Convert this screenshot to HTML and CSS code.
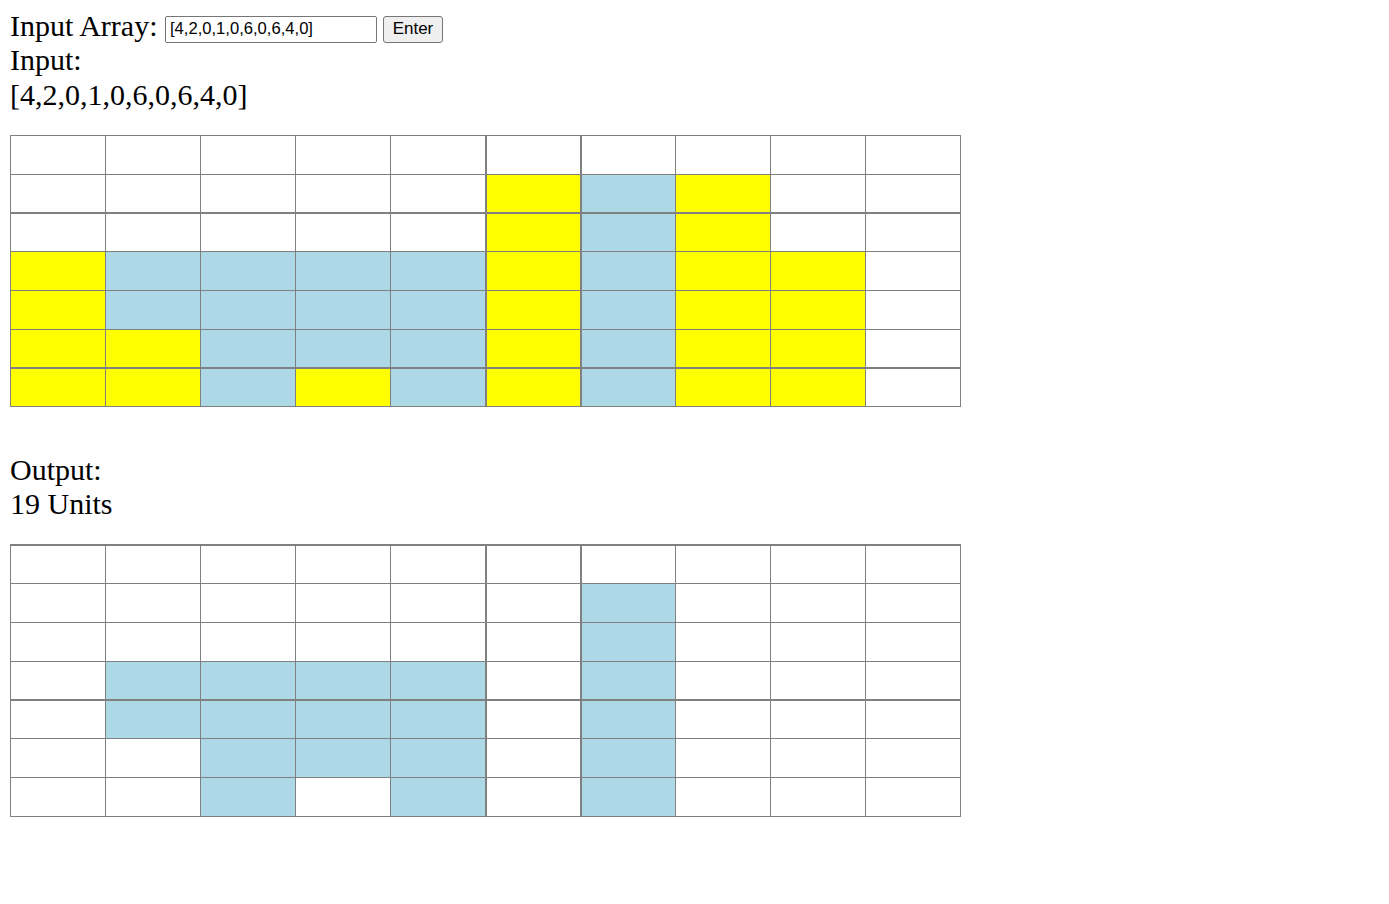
FILE: index.html
```html
<!DOCTYPE html>
<html>
<head>
<meta charset="utf-8">
<link rel="stylesheet" href="styles.css">
</head>
<body>
<div class="page">
  <div class="line first">Input Array: <input class="arr-input" type="text" value="[4,2,0,1,0,6,0,6,4,0]"><button class="enter">Enter</button></div>
  <div class="line">Input:</div>
  <div class="line">[4,2,0,1,0,6,0,6,4,0]</div>
  <div class="grid grid-in">
    <div></div><div></div><div></div><div></div><div></div><div></div><div></div><div></div><div></div><div></div>
    <div></div><div></div><div></div><div></div><div></div><div class="y"></div><div class="b"></div><div class="y"></div><div></div><div></div>
    <div></div><div></div><div></div><div></div><div></div><div class="y"></div><div class="b"></div><div class="y"></div><div></div><div></div>
    <div class="y"></div><div class="b"></div><div class="b"></div><div class="b"></div><div class="b"></div><div class="y"></div><div class="b"></div><div class="y"></div><div class="y"></div><div></div>
    <div class="y"></div><div class="b"></div><div class="b"></div><div class="b"></div><div class="b"></div><div class="y"></div><div class="b"></div><div class="y"></div><div class="y"></div><div></div>
    <div class="y"></div><div class="y"></div><div class="b"></div><div class="b"></div><div class="b"></div><div class="y"></div><div class="b"></div><div class="y"></div><div class="y"></div><div></div>
    <div class="y"></div><div class="y"></div><div class="b"></div><div class="y"></div><div class="b"></div><div class="y"></div><div class="b"></div><div class="y"></div><div class="y"></div><div></div>
  </div>
  <div class="line2 out-label">Output:</div>
  <div class="line2">19 Units</div>
  <div class="grid grid-out">
    <div></div><div></div><div></div><div></div><div></div><div></div><div></div><div></div><div></div><div></div>
    <div></div><div></div><div></div><div></div><div></div><div></div><div class="b"></div><div></div><div></div><div></div>
    <div></div><div></div><div></div><div></div><div></div><div></div><div class="b"></div><div></div><div></div><div></div>
    <div></div><div class="b"></div><div class="b"></div><div class="b"></div><div class="b"></div><div></div><div class="b"></div><div></div><div></div><div></div>
    <div></div><div class="b"></div><div class="b"></div><div class="b"></div><div class="b"></div><div></div><div class="b"></div><div></div><div></div><div></div>
    <div></div><div></div><div class="b"></div><div class="b"></div><div class="b"></div><div></div><div class="b"></div><div></div><div></div><div></div>
    <div></div><div></div><div class="b"></div><div></div><div class="b"></div><div></div><div class="b"></div><div></div><div></div><div></div>
  </div>
</div>
</body>
</html>
```

FILE: styles.css
```css
html, body {
  margin: 0;
  padding: 0;
  background: #ffffff;
}

.page {
  padding: 8px 10px 0 10px;
  font-family: "Liberation Serif", "Times New Roman", serif;
  font-size: 30px;
  color: #000000;
}

.line {
  height: 34.5px;
  line-height: 34.5px;
  white-space: nowrap;
}

.line2 {
  height: 34px;
  line-height: 34px;
  white-space: nowrap;
}

.first {
  height: 35px;
  line-height: 35px;
}

.arr-input {
  box-sizing: border-box;
  width: 212px;
  height: 27px;
  margin: 0;
  padding: 1px 4px;
  border: 1px solid #767676;
  border-radius: 2px;
  font-family: "Liberation Sans", Arial, sans-serif;
  font-size: 16.6px;
  color: #000000;
  vertical-align: 2px;
}

.enter {
  box-sizing: border-box;
  width: 60px;
  height: 27px;
  padding: 0;
  margin: 0 0 0 6px;
  border: 1px solid #767676;
  border-radius: 3px;
  background: #efefef;
  font-family: "Liberation Sans", Arial, sans-serif;
  font-size: 17px;
  color: #000000;
  vertical-align: 2px;
}

.grid {
  display: grid;
  grid-template-columns: repeat(10, 95px);
  width: 951px;
  box-sizing: border-box;
  border-left: 1px solid #808080;
  border-top: 1px solid #808080;
}

.grid > div {
  box-sizing: border-box;
  border-right: 1px solid #808080;
  border-bottom: 1px solid #808080;
  background: #ffffff;
}

.grid > div:nth-child(10n+6),
.grid > div:nth-child(10n+7) {
  border-left: 1px solid #808080;
}

.grid > div.y {
  background: #ffff00;
}

.grid > div.b {
  background: #add8e6;
}

.grid-in {
  margin-top: 23px;
  grid-template-rows: 39px 38px 39px 39px 39px 38px 39px;
}

.grid-in > div:nth-child(n+21):nth-child(-n+30),
.grid-in > div:nth-child(n+61) {
  border-top: 1px solid #808080;
}

.out-label {
  margin-top: 46px;
}

.grid-out {
  margin-top: 23px;
  border-top-width: 2px;
  grid-template-rows: 38px 39px 39px 38px 39px 39px 39px;
}

.grid-out > div:nth-child(n+41):nth-child(-n+50) {
  border-top: 1px solid #808080;
}
```
